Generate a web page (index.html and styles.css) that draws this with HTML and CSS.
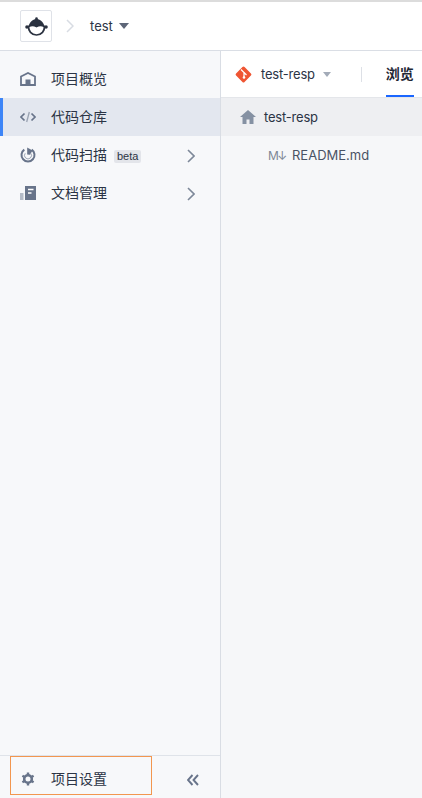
FILE: index.html
```html
<!DOCTYPE html>
<html lang="zh">
<head>
<meta charset="utf-8">
<title>test</title>
<link rel="stylesheet" href="styles.css">
</head>
<body>
<div class="app">
  <header class="topbar">
    <div class="logo">
      <svg width="23" height="19" viewBox="0 0 23 19"><circle cx="11.500" cy="1.500" r="1.300" fill="#2b3240"/><path d="M3.500 9C5 4.500 8.500 2 11.500 2s6.500 2.500 8 7z" fill="#2b3240"/><circle cx="2" cy="10" r="1.800" fill="#2b3240"/><circle cx="21" cy="10" r="1.800" fill="#2b3240"/><path d="M3.700 9.500c2.500-1.300 5.800-1 7.800 0 2-1 5.300-1.300 7.800 0 .6 4.500-2.800 8.500-7.800 8.500S3.100 14 3.700 9.500z" fill="#fff" stroke="#2b3240" stroke-width="1.700"/></svg>
    </div>
    <svg class="crumb" width="8" height="14" viewBox="0 0 8 14"><path d="M1 1l6 6-6 6" fill="none" stroke="#d8dce3" stroke-width="1.500"/></svg>
    <span class="project">test</span>
    <span class="caret caret-dark"></span>
  </header>
  <div class="body">
    <aside class="sidebar">
      <nav class="nav">
        <a class="nav-item">
          <svg class="nav-icon" width="16" height="14" viewBox="0 0 16 14"><path d="M1 13V4.500L8 1l7 3.500V13z" fill="none" stroke="#68748a" stroke-width="1.800"/><rect x="5.500" y="7.500" width="5" height="6" fill="#68748a"/></svg>
          <span class="label">项目概览</span>
        </a>
        <a class="nav-item active">
          <svg class="nav-icon" width="16" height="12" viewBox="0 0 16 12"><path d="M4.500 2.500L1 6l3.500 3.500M11.500 2.500L15 6l-3.500 3.500" fill="none" stroke="#68748a" stroke-width="1.700"/><path d="M9.300 1L6.700 11" stroke="#9aa3b2" stroke-width="1.300"/></svg>
          <span class="label">代码仓库</span>
        </a>
        <a class="nav-item">
          <svg class="nav-icon scan" width="16" height="16" viewBox="0 0 16 16"><path d="M4.300 2.600A6.500 6.500 0 1 0 11.700 2.600" fill="none" stroke="#68748a" stroke-width="2"/><path d="M7.200 0.500L12.500 3.500 10 7.800 7.200 7.500z" fill="#68748a"/><path d="M5.200 6.300a3.500 3.500 0 1 0 5.600 0" fill="none" stroke="#9aa3b2" stroke-width="1"/></svg>
          <span class="label">代码扫描</span>
          <span class="badge">beta</span>
          <svg class="chev" width="8" height="14" viewBox="0 0 8 14"><path d="M1 1l6 6-6 6" fill="none" stroke="#7d8899" stroke-width="1.600"/></svg>
        </a>
        <a class="nav-item">
          <svg class="nav-icon" width="16" height="14" viewBox="0 0 16 14"><rect x="0" y="7" width="3.500" height="7" fill="#b4bbc7"/><path d="M5 0h11v14H5z" fill="#68748a"/><path d="M8 3.500h5.500M8 7h3.500" stroke="#fff" stroke-width="1.500"/></svg>
          <span class="label">文档管理</span>
          <svg class="chev" width="8" height="14" viewBox="0 0 8 14"><path d="M1 1l6 6-6 6" fill="none" stroke="#7d8899" stroke-width="1.600"/></svg>
        </a>
      </nav>
      <footer class="side-foot">
        <a class="settings">
          <svg class="nav-icon" width="14" height="14" viewBox="0 0 14 14"><circle cx="7" cy="7" r="3.800" fill="none" stroke="#68748a" stroke-width="2.600"/><path d="M7 .5v2.500M7 11v2.500M1.400 3.750l2.150 1.250M10.450 9l2.150 1.250M1.400 10.250L3.550 9M10.450 5l2.150-1.250" stroke="#68748a" stroke-width="2.400"/></svg>
          <span class="label">项目设置</span>
        </a>
        <svg class="collapse" width="12" height="12" viewBox="0 0 12 12"><path d="M5.500 1L1 6l4.500 5M11 1L6.500 6l4.500 5" fill="none" stroke="#68748a" stroke-width="1.900"/></svg>
      </footer>
    </aside>
    <main class="main">
      <div class="tabs">
        <svg class="git" width="17" height="17" viewBox="0 0 17 17"><rect x="2.500" y="2.500" width="12" height="12" rx="1.500" transform="rotate(45 8.500 8.500)" fill="#ef5533"/><path d="M6 3.500l3 3v5M9 6.500l2.500 2.500" stroke="#fff" stroke-width="1.200" fill="none"/><circle cx="9" cy="11.500" r="1.300" fill="#fff"/></svg>
        <span class="repo">test-resp</span>
        <span class="caret caret-light"></span>
        <span class="divider"></span>
        <span class="tab">浏览</span>
      </div>
      <div class="row row-head">
        <svg width="16" height="14" viewBox="0 0 16 14"><path d="M8 0L0 7h2.500v7h4V9.500h3V14h4V7H16z" fill="#8591a3"/></svg>
        <span class="name">test-resp</span>
      </div>
      <div class="row row-file">
        <span class="md">M↓</span>
        <span>README.md</span>
      </div>
    </main>
  </div>
</div>
</body>
</html>
```
FILE: styles.css
```css
* { box-sizing: border-box; }
html, body { margin: 0; height: 100%; }
body {
  font-family: "Inter", "Noto Sans CJK SC", sans-serif;
  font-size: 13px;
  color: #2b3445;
  background: #f6f7f9;
  overflow: hidden;
}
.app { height: 798px; display: flex; flex-direction: column; }
.topbar {
  height: 51px;
  flex: none;
  display: flex;
  align-items: center;
  padding: 0 0 0 20px;
  background: #fff;
  border-top: 2px solid #dcdcdc;
  border-bottom: 1px solid #dadee5;
}
.logo {
  width: 32px;
  height: 32px;
  display: flex;
  align-items: center;
  justify-content: center;
  border: 1px solid #dfe2e8;
  border-radius: 2px;
}
.crumb { margin-left: 14px; }
.project { margin-left: 16px; font-size: 13px; }
.caret {
  width: 0;
  height: 0;
  border-left: 5px solid transparent;
  border-right: 5px solid transparent;
}
.caret-dark { margin-left: 6px; border-top: 6px solid #5d6678; }
.caret-light { margin-left: 8px; border-left-width: 4.500px; border-right-width: 4.500px; border-top: 5px solid #a3abb8; }
.body { flex: 1; display: flex; min-height: 0; }
.sidebar {
  width: 221px;
  flex: none;
  display: flex;
  flex-direction: column;
  background: #f7f8fa;
  border-right: 1px solid #d9dde4;
}
.nav { flex: 1; padding-top: 9px; }
.nav-item {
  height: 38px;
  display: flex;
  align-items: center;
  padding-left: 20px;
}
.label { font-size: 14px; margin-left: 15px; line-height: 20px; }
.nav-icon { flex: none; }
.nav-item .nav-icon { width: 16px; }
.active {
  background: #e3e7ef;
  box-shadow: inset 3px 0 0 #3d85f7;
}
.badge {
  margin-left: 7px;
  margin-top: 2px;
  padding: 0 3px;
  height: 13px;
  line-height: 13px;
  font-size: 11px;
  font-family: "Liberation Sans", sans-serif;
  background: #e3e5ea;
  border-radius: 2px;
}
.chev { margin-left: auto; margin-right: 25px; margin-top: 1px; }
.side-foot {
  height: 43px;
  flex: none;
  display: flex;
  align-items: flex-start;
  border-top: 1px solid #dfe3e9;
}
.settings {
  margin-left: 10px;
  width: 142px;
  height: 39px;
  display: flex;
  align-items: center;
  padding: 6px 0 0 10px;
  gap: 1px;
  border: 1px solid #f2964f;
}
.collapse { margin-left: 35px; margin-top: 18px; }
.main { flex: 1; min-width: 0; }
.tabs {
  height: 47px;
  display: flex;
  align-items: center;
  padding-left: 14px;
  background: #fff;
  border-bottom: 1px solid #e4e6ea;
}
.repo { margin-left: 9px; letter-spacing: -.2px; }
.divider { width: 1px; height: 15px; margin-left: 30px; background: #dde0e6; }
.tab {
  align-self: stretch;
  display: flex;
  align-items: center;
  margin-left: 24px;
  width: 28px;
  font-size: 14px;
  font-weight: 700;
  color: #1f2735;
  border-bottom: 2px solid #1a66ff;
  margin-bottom: 0;
  white-space: nowrap;
}
.row { height: 38px; display: flex; align-items: center; }
.name { letter-spacing: -.2px; }
.row-head { padding-left: 19px; gap: 8px; background: #eeeff2; }
.row-file { padding-left: 47px; gap: 5px; color: #4a5364; }
.md { color: #7d8796; font-size: 12px; letter-spacing: -1.500px; width: 19px; white-space: nowrap; }
```
